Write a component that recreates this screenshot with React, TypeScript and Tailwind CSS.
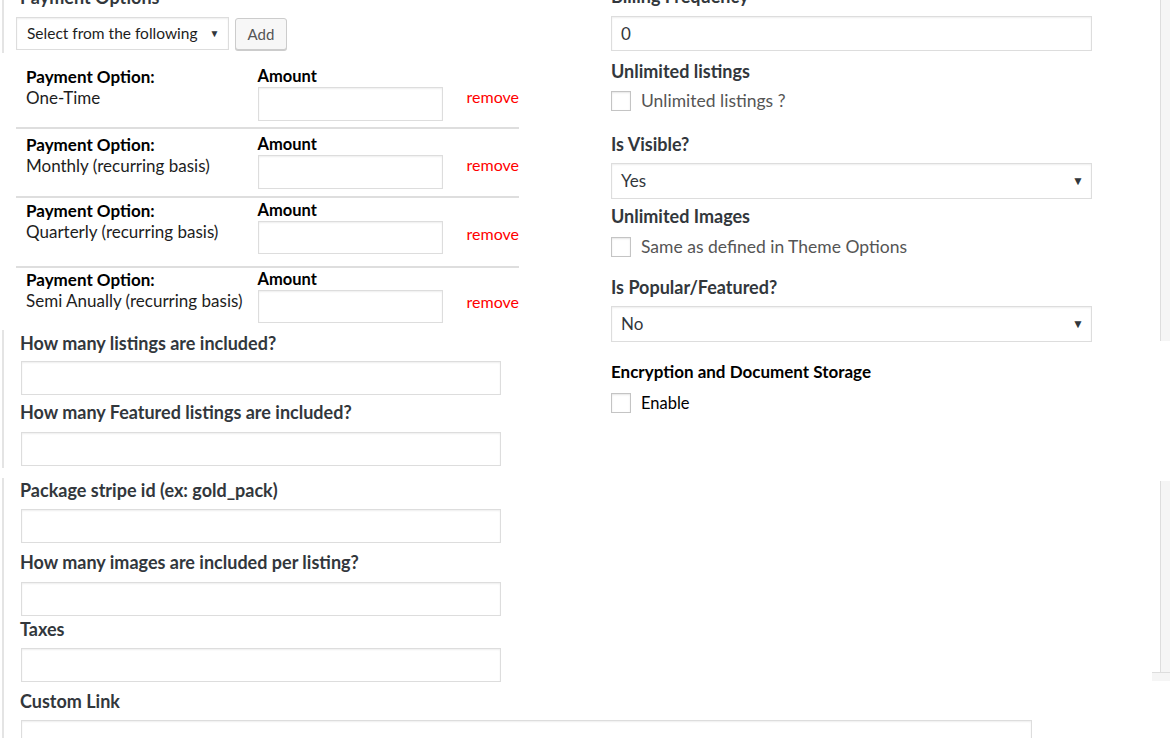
import React from "react";

const inputBase =
  "bg-white border border-[#dddddd] shadow-[inset_0_1px_2px_rgba(0,0,0,0.07)]";

function PayRow({
  value,
  rowCls,
  removeCls,
  inputCls,
}: {
  value: string;
  rowCls: string;
  removeCls: string;
  inputCls: string;
}) {
  return (
    <div className={`flex w-[503px] ${rowCls}`}>
      <div className="w-[242px] pl-[10px] text-[17px] leading-[21px]">
        <div className="font-bold text-black">Payment Option:</div>
        <div className="text-[#1d1d1d]">{value}</div>
      </div>
      <div className="w-[185px] flex flex-col">
        <div className="font-bold text-black text-[16.5px] leading-[21px]">Amount</div>
        <div className={`w-[185px] ${inputCls} ${inputBase}`} />
      </div>
      <div className={`ml-[24px] ${removeCls}`}>
        <span className="text-[16px] leading-[17px] text-[#ff0000]">remove</span>
      </div>
    </div>
  );
}

function Label({ text, cls }: { text: string; cls: string }) {
  return (
    <div className={`text-[18px] leading-[20px] font-bold text-[#32373c] ${cls}`}>
      {text}
    </div>
  );
}

function Check({ text, cls, textCls }: { text: string; cls: string; textCls: string }) {
  return (
    <div className={`flex items-center h-[20px] ${cls}`}>
      <div className="w-[20px] h-[20px] bg-white border border-[#c4c4c4] shadow-[inset_0_1px_2px_rgba(0,0,0,0.1)]" />
      <span className={`ml-[10px] ${textCls}`}>{text}</span>
    </div>
  );
}

function Select({ value, cls }: { value: string; cls: string }) {
  return (
    <div
      className={`w-[481px] h-[36px] flex items-center justify-between pl-[9px] pr-[7px] ${inputBase} ${cls}`}
    >
      <span className="text-[17px] text-[#32373c]">{value}</span>
      <span className="text-[12px] text-[#32373c]">▼</span>
    </div>
  );
}

export default function App() {
  return (
    <div className="w-[1170px] h-[738px] overflow-hidden bg-white flex font-['Lato',sans-serif]">
      {/* left edge strip */}
      <div className="w-[4px] flex flex-col shrink-0">
        <div className="h-[53px] ml-[2px] w-[2px] bg-[#e4e4e4]" />
        <div className="h-[277px]" />
        <div className="h-[138px] ml-[2px] w-[2px] bg-[#e4e4e4]" />
        <div className="h-[10px]" />
        <div className="flex-1 ml-[2px] w-[2px] bg-[#e4e4e4]" />
      </div>

      {/* main */}
      <div className="flex-1 flex flex-col">
        <div className="flex">
          {/* left column */}
          <div className="w-[586px] flex flex-col shrink-0">
            <div className="pl-[16px] -mt-[13px] text-[18px] leading-[20px] font-bold text-[#32373c]">
              Payment Options
            </div>
            <div className="flex items-start pl-[12px] mt-[10px]">
              <div className={`w-[213px] h-[33px] flex items-center pl-[10px] ${inputBase}`}>
                <span className="text-[15.5px] text-[#1d1d1d]">Select from the following</span>
                <span className="ml-[12px] text-[10px] text-[#32373c]">▼</span>
              </div>
              <div className="ml-[6px] mt-[1px] w-[52px] h-[32px] flex items-center justify-center bg-[#f7f7f7] border border-[#cccccc] rounded-[3px] shadow-[0_1px_0_#cccccc] text-[15px] text-[#555555]">
                Add
              </div>
            </div>

            <div className="pl-[12px] flex flex-col">
              <PayRow
                value="One-Time"
                rowCls="pt-[16px] pb-[6px] border-b-2 border-[#dedede]"
                removeCls="pt-[19px]"
                inputCls="h-[34px]"
              />
              <PayRow
                value="Monthly (recurring basis)"
                rowCls="pt-[5px] pb-[7px] border-b-2 border-[#dedede]"
                removeCls="pt-[19px]"
                inputCls="h-[34px]"
              />
              <PayRow
                value="Quarterly (recurring basis)"
                rowCls="pt-[2px] pb-[12px] border-b-2 border-[#dedede]"
                removeCls="pt-[22px]"
                inputCls="h-[33px]"
              />
              <PayRow
                value="Semi Anually (recurring basis)"
                rowCls="pt-[1px]"
                removeCls="pt-[21px]"
                inputCls="h-[33px]"
              />
            </div>

            <div className="pl-[16px] flex flex-col">
              <Label text="How many listings are included?" cls="mt-[10px]" />
              <div className={`ml-[1px] mt-[8px] w-[480px] h-[34px] ${inputBase}`} />
              <Label text="How many Featured listings are included?" cls="mt-[7px]" />
              <div className={`ml-[1px] mt-[10px] w-[480px] h-[34px] ${inputBase}`} />
              <Label text="Package stripe id (ex: gold_pack)" cls="mt-[14px]" />
              <div className={`ml-[1px] mt-[9px] w-[480px] h-[34px] ${inputBase}`} />
              <Label text="How many images are included per listing?" cls="mt-[9px]" />
              <div className={`ml-[1px] mt-[10px] w-[480px] h-[34px] ${inputBase}`} />
              <Label text="Taxes" cls="mt-[3px]" />
              <div className={`ml-[1px] mt-[9px] w-[480px] h-[34px] ${inputBase}`} />
            </div>
          </div>

          {/* right column */}
          <div className="ml-[21px] w-[481px] flex flex-col">
            <Label text="Billing Frequency" cls="-mt-[14px]" />
            <div className={`mt-[10px] w-[481px] h-[35px] flex items-center pl-[9px] ${inputBase}`}>
              <span className="text-[17px] text-[#32373c]">0</span>
            </div>
            <Label text="Unlimited listings" cls="mt-[10px]" />
            <Check
              text="Unlimited listings ?"
              cls="mt-[10px]"
              textCls="text-[17.5px] text-[#555555]"
            />
            <Label text="Is Visible?" cls="mt-[23px]" />
            <Select value="Yes" cls="mt-[9px]" />
            <Label text="Unlimited Images" cls="mt-[7px]" />
            <Check
              text="Same as defined in Theme Options"
              cls="mt-[11px]"
              textCls="text-[17.5px] text-[#555555]"
            />
            <Label text="Is Popular/Featured?" cls="mt-[20px]" />
            <Select value="No" cls="mt-[9px]" />
            <div className="mt-[20px] text-[17px] leading-[20px] font-bold text-black">
              Encryption and Document Storage
            </div>
            <Check text="Enable" cls="mt-[11px]" textCls="text-[16.5px] text-black" />
          </div>
        </div>

        {/* custom link */}
        <div className="pl-[16px] flex flex-col">
          <Label text="Custom Link" cls="mt-[9px]" />
          <div className={`ml-[1px] mt-[9px] w-[1011px] h-[34px] ${inputBase}`} />
        </div>
      </div>

      {/* right edge strip */}
      <div className="w-[18px] flex flex-col shrink-0">
        <div className="h-[341px] ml-[8px] border-l border-[#dddddd] bg-[#f5f5f5]" />
        <div className="h-[140px]" />
        <div className="h-[191px] ml-[8px] border-l border-[#dddddd] bg-[#f5f5f5]" />
        <div className="h-[9px] border-t border-[#dddddd] bg-[#f5f5f5]" />
      </div>
    </div>
  );
}
